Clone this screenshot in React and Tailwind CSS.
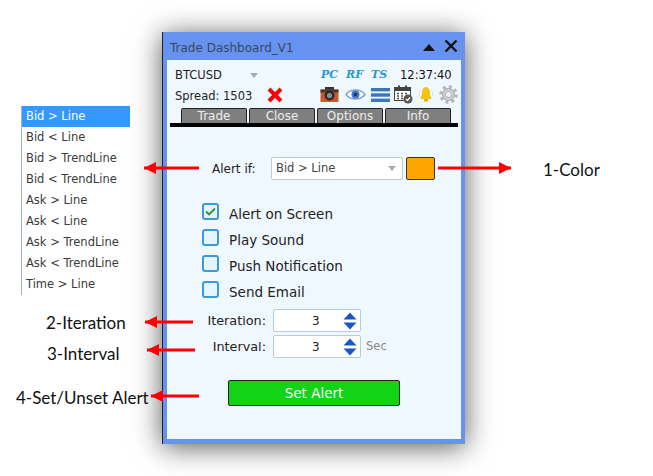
const alertTypes = ["Bid > Line", "Bid < Line", "Bid > TrendLine", "Bid < TrendLine", "Ask > Line", "Ask < Line", "Ask > TrendLine", "Ask < TrendLine", "Time > Line"];
const tabs = ["Trade", "Close", "Options", "Info"];
const options = [
  { label: "Alert on Screen", checked: true },
  { label: "Play Sound" },
  { label: "Push Notification" },
  { label: "Send Email" },
];

// tip, tail, y of each callout arrow
const arrows = [
  [144, 199, 168],
  [511, 438, 168],
  [145, 193, 322],
  [147, 195, 350],
  [151, 199, 396],
];

const Camera = () => (
  <svg width="19" height="17" viewBox="0 0 19 17">
    <rect x="5" y="1" width="9" height="4" fill="#333" />
    <rect x="0.5" y="3.5" width="18" height="12.5" rx="1" fill="#c9582c" />
    <rect x="0.5" y="3.5" width="18" height="3" fill="#4a3a34" />
    <circle cx="9.5" cy="9.5" r="5" fill="#2b2b2b" />
    <circle cx="9.5" cy="9.5" r="2.6" fill="#8c8c8c" />
  </svg>
);

const Eye = () => (
  <svg width="21" height="15" viewBox="0 0 21 15" className="ml-[6px]">
    <path d="M1 7.5 C5 1.5 16 1.5 20 7.5 C16 13.5 5 13.5 1 7.5 Z" fill="#fff" stroke="#7f9fd6" strokeWidth="1.4" />
    <circle cx="10.5" cy="7.5" r="4" fill="#3f76c9" />
    <circle cx="10.5" cy="7.5" r="1.7" fill="#1c2f66" />
  </svg>
);

const Stack = () => (
  <svg width="19" height="16" viewBox="0 0 19 16" className="ml-[5px]">
    <rect x="0" y="1" width="19" height="3.4" fill="#3a78bd" />
    <rect x="0" y="6.3" width="19" height="3.4" fill="#3a78bd" />
    <rect x="0" y="11.6" width="19" height="3.4" fill="#3a78bd" />
  </svg>
);

const Calendar = () => (
  <svg width="19" height="19" viewBox="0 0 19 19" className="ml-[4px]">
    <rect x="0.5" y="2.5" width="16" height="13" fill="#fff" stroke="#444" />
    <rect x="0.5" y="2.5" width="16" height="3.5" fill="#444" />
    <rect x="4" y="0.5" width="2" height="4" fill="#444" />
    <rect x="11" y="0.5" width="2" height="4" fill="#444" />
    <path d="M3 8.5h2M7 8.5h2M11 8.5h2M3 11h2M7 11h2M3 13.5h2M7 13.5h2" stroke="#555" strokeWidth="1.4" />
    <circle cx="14" cy="14" r="4.5" fill="#555" />
    <path d="M12 14l1.5 1.5 2.5-3" fill="none" stroke="#fff" strokeWidth="1.2" />
  </svg>
);

const Bell = () => (
  <svg width="14" height="17" viewBox="0 0 14 17" className="ml-[6px]">
    <path d="M1 5C0 7 0 9 1 11M13 5c1 2 1 4 0 6" fill="none" stroke="#e0dcc4" strokeWidth="1" />
    <path d="M7 1.5c-2.4 0-3.4 2-3.4 4.5 0 3-1 5-1.8 6.5h10.4c-0.8-1.5-1.8-3.5-1.8-6.5 0-2.5-1-4.5-3.4-4.5Z" fill="#f6c500" stroke="#d9a900" strokeWidth="0.5" />
    <rect x="5" y="13" width="4" height="2.5" fill="#e8b000" />
  </svg>
);

const Gear = () => (
  <svg width="19" height="19" viewBox="0 0 19 19" className="ml-[6px]">
    <circle cx="9.5" cy="9.5" r="7.5" fill="none" stroke="#b5b5b5" strokeWidth="3.5" strokeDasharray="3 2.89" />
    <circle cx="9.5" cy="9.5" r="6" fill="#d0d0d0" stroke="#a8a8a8" />
    <circle cx="9.5" cy="9.5" r="3" fill="#f0f8ff" stroke="#aaa" />
  </svg>
);

const Spinner = () => (
  <svg width="14" height="18" viewBox="0 0 14 18">
    <path d="M7 0.5L13.5 7.5H0.5Z" fill="#1a56c4" />
    <path d="M7 17.5L13.5 10.5H0.5Z" fill="#1a56c4" />
  </svg>
);

const SpinField = ({ value }) => (
  <div className="flex h-[23px] w-[88px] items-center rounded-[2px] border border-[#b9cbdc] bg-white pl-[38px] pr-[3px]">
    <span className="flex-1 text-[12px] text-[#222]">{value}</span>
    <Spinner />
  </div>
);

export default function App() {
  return (
    <div className="relative flex h-[476px] w-[653px] overflow-hidden bg-white font-['DejaVu_Sans',sans-serif]">
      {/* left column, alert type list and callout labels */}
      <div className="w-[162px] shrink-0 pt-[106px]">
        <ul className="ml-[21px] w-[109px] border-l border-[#9db4cc] text-[11.5px] text-[#3a3a3a]">
          {alertTypes.map((type, i) => (
            <li key={type} className={`flex h-[21px] items-center pl-[4px] ${i === 0 ? "bg-[#3399ff] text-white" : ""}`}>
              {type}
            </li>
          ))}
        </ul>
        <div className="mt-[18px] font-['Lato',sans-serif] text-[17px] leading-[20px] text-[#111]">
          <p className="pl-[46px]">2-Iteration</p>
          <p className="mt-[11px] pl-[47px]">3-Interval</p>
          <p className="mt-[24px] pl-[16px]">4-Set/Unset Alert</p>
        </div>
      </div>

      {/* dashboard window */}
      <div className="mt-[32px] flex h-[412px] w-[303px] shrink-0 flex-col border-l border-[#222] bg-[#6593ef] px-[4px] pb-[5px] shadow-[0_3px_26px_rgba(0,0,0,0.65)]">
        <div className="flex h-[28px] shrink-0 items-center pl-[3px]">
          <span className="flex-1 pt-[3px] text-[12px] text-[#3a4660]">Trade Dashboard_V1</span>
          <svg width="12" height="7" viewBox="0 0 12 7" className="mt-[3px]"><path d="M6 0L12 7H0Z" fill="#111" /></svg>
          <svg width="14" height="14" viewBox="0 0 14 14" className="ml-[9px] mr-[3px]"><path d="M1.5 1.5L12.5 12.5M12.5 1.5L1.5 12.5" stroke="#111" strokeWidth="2.4" /></svg>
        </div>

        <div className="flex-1 bg-[#f0f8ff]">
          <div className="mt-[5px] flex h-[20px] items-center pl-[8px] pt-[1px]">
            <span className="w-[75px] text-[11.5px] text-[#222]">BTCUSD</span>
            <svg width="8" height="5" viewBox="0 0 8 5"><path d="M0 0H8L4 5Z" fill="#aaa" /></svg>
            <span className="ml-[63px] w-[25px] font-['DejaVu_Serif',serif] text-[11px] font-bold italic text-[#2a96d8]">PC</span>
            <span className="w-[25px] font-['DejaVu_Serif',serif] text-[11px] font-bold italic text-[#2a96d8]">RF</span>
            <span className="w-[29px] font-['DejaVu_Serif',serif] text-[11px] font-bold italic text-[#2a96d8]">TS</span>
            <span className="text-[11.5px] text-[#111]">12:37:40</span>
          </div>
          <div className="flex h-[19px] items-center pl-[8px]">
            <span className="mt-[5px] w-[92px] text-[11.5px] text-[#222]">Spread: 1503</span>
            <svg width="16" height="16" viewBox="0 0 16 16"><path d="M2 2L14 14M14 2L2 14" stroke="#f00" strokeWidth="4" /></svg>
            <div className="ml-[37px] flex items-center">
              <Camera />
              <Eye />
              <Stack />
              <Calendar />
              <Bell />
              <Gear />
            </div>
          </div>

          <div className="mt-[4px] flex gap-[2px] pl-[14px]">
            {tabs.map((tab) => (
              <div key={tab} className="flex h-[15px] w-[66px] items-center justify-center rounded-t-[2px] border-x border-t border-[#222] bg-[#7f7f7f] text-[12px] text-[#eee]">
                {tab}
              </div>
            ))}
          </div>
          <div className="ml-[3px] h-[4px] w-[288px] bg-black" />

          <div className="mt-[30px] flex h-[23px] items-center pl-[45px]">
            <span className="w-[59px] text-[12px] text-[#222]">Alert if:</span>
            <div className="flex h-[23px] w-[132px] items-center justify-between rounded-[2px] border border-[#b9cbdc] bg-white pl-[4px] pr-[6px] text-[11.5px] text-[#444]">
              Bid &gt; Line
              <svg width="8" height="5" viewBox="0 0 8 5"><path d="M0 0H8L4 5Z" fill="#aaa" /></svg>
            </div>
            <div className="ml-[3px] h-[23px] w-[29px] rounded-[2px] border border-[#333] bg-[#ffa500]" />
          </div>

          <div className="mt-[23px] flex flex-col gap-[9px] pl-[35px]">
            {options.map((option) => (
              <label key={option.label} className="flex h-[17px] items-center gap-[10px] text-[13.5px] text-[#222]">
                <span className="flex size-[17px] shrink-0 items-center justify-center rounded-[3px] border-2 border-[#3d9ad9] bg-[#e6f4ff]">
                  {option.checked && (
                    <svg width="11" height="9" viewBox="0 0 11 9"><path d="M1 4.5L4 7.5L10 1.5" fill="none" stroke="#1f9a3a" strokeWidth="1.8" /></svg>
                  )}
                </span>
                <span className="pt-[6px]">{option.label}</span>
              </label>
            ))}
          </div>

          <div className="mt-[11px] flex flex-col gap-[3px] pl-[40px]">
            <div className="flex items-center">
              <span className="w-[66px] pr-[7px] text-right text-[12.8px] text-[#222]">Iteration:</span>
              <SpinField value="3" />
            </div>
            <div className="flex items-center">
              <span className="w-[66px] pr-[7px] text-right text-[12.8px] text-[#222]">Interval:</span>
              <SpinField value="3" />
              <span className="ml-[5px] mt-[1px] text-[11.5px] text-[#888]">Sec</span>
            </div>
          </div>

          <button className="ml-[61px] mt-[22px] block h-[26px] w-[172px] rounded-[2px] border border-[#222] bg-[#12d316] text-[13.5px] text-white">
            Set Alert
          </button>
        </div>
      </div>

      {/* right side callout */}
      <div className="flex-1 pl-[78px] pt-[160px] font-['Lato',sans-serif] text-[17px] leading-[20px] text-[#111]">1-Color</div>

      {/* red callout arrows lie over everything */}
      <svg width="653" height="476" className="pointer-events-none absolute left-0 top-0">
        {arrows.map(([tip, tail, y]) => {
          const dir = tail > tip ? 1 : -1;
          return (
            <g key={`${tip}-${y}`} fill="#f00" stroke="none">
              <rect x={Math.min(tip, tail)} y={y - 1.5} width={Math.abs(tail - tip)} height="3" />
              <path d={`M${tip} ${y}L${tip + dir * 12} ${y - 6}V${y + 6}Z`} />
            </g>
          );
        })}
      </svg>
    </div>
  );
}
